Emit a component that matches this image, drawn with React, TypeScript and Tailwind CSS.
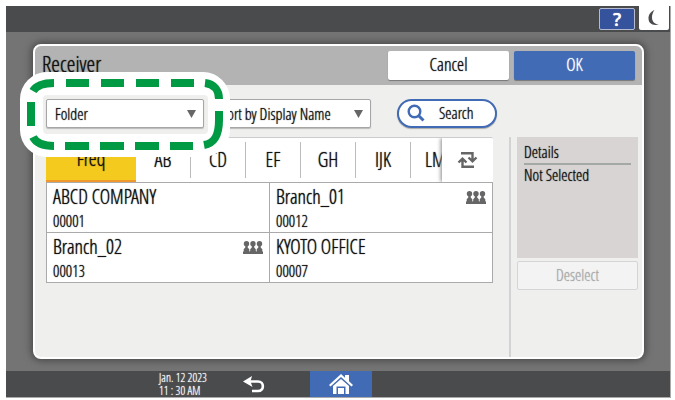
import type { ReactNode } from "react";

const tabs = ["AB", "CD", "EF", "GH", "IJK"];

interface Contact {
  name: string;
  code: string;
  group?: boolean;
}

const contacts: Contact[][] = [
  [
    { name: "ABCD COMPANY", code: "00001" },
    { name: "Branch_01", code: "00012", group: true },
  ],
  [
    { name: "Branch_02", code: "00013", group: true },
    { name: "KYOTO OFFICE", code: "00007" },
  ],
];

function GroupIcon() {
  return (
    <svg viewBox="0 0 20 13" className="h-[13px] w-5 fill-[#666]" aria-hidden="true">
      {[0, 6.5, 13].map((x) => (
        <g key={x} transform={`translate(${x} 0)`}>
          <circle cx="3.500" cy="2.800" r="2.700" />
          <path d="M2.300 4H4.700V6.500L6.300 8.300V10L7 11V13H0V11L.700 10V8.300L2.300 6.500z" />
        </g>
      ))}
    </svg>
  );
}

interface DropDownProps {
  label: string;
  option: string;
  className: string;
  children?: ReactNode;
}

function DropDown({ label, option, className, children }: DropDownProps) {
  return (
    <div className={className}>
      <select
        aria-label={label}
        className="h-[29px] w-full appearance-none rounded-xs border border-[#a6a6a6] bg-white px-2 text-base leading-5 shadow-[0_1px_1px_#bbb]"
      >
        <option>{option}</option>
      </select>
      <svg viewBox="0 0 9 8" className="pointer-events-none absolute top-[11px] right-2 h-2 w-[9px] fill-[#666]" aria-hidden="true">
        <path d="M0 0h9L4.500 8z" />
      </svg>
      {children}
    </div>
  );
}

/* White frame with a green dashed line around the folder drop-down */
function Callout() {
  return (
    <svg
      viewBox="0 0 210 85"
      className="pointer-events-none absolute -top-[27px] -left-[26px] h-[85px] w-[210px] max-w-none"
      aria-hidden="true"
    >
      <path
        fill="#fff"
        fillRule="evenodd"
        d="M27 0H183A27 27 0 0 1 210 27V58A27 27 0 0 1 183 85H27A27 27 0 0 1 0 58V27A27 27 0 0 1 27 0ZM27 23A4 4 0 0 0 23 27V58A4 4 0 0 0 27 62H184A4 4 0 0 0 188 58V27A4 4 0 0 0 184 23Z"
      />
      <path
        fill="none"
        stroke="#009944"
        strokeWidth="8"
        d="M13 19C16 14 22 11 34 11M46 11H69M81 11H104M116 11H139M151 11H174M185 11C194 12 199 18 199 27M199 39V48C199 63 195 71 184 73M173 74H150M139 74H115M104 74H80M69 74H45M34 74C22 74 16 71 13 65M11 54V30"
      />
    </svg>
  );
}

export default function App() {
  return (
    <div className="bg-white p-1.5 pr-1 font-['Open_Sans_Condensed_Light','Roboto_Condensed',sans-serif] text-[#111] **:[text-shadow:0_0_1px_currentColor]">
      <div className="flex flex-col border-r border-b border-[#aaa] bg-[#747474]">
        <header className="flex h-[26px] items-start justify-end gap-1 bg-[#4a4b4d] pr-px">
          <button
            type="button"
            aria-label="Help"
            className="mt-0.5 flex h-[22px] w-9 items-center justify-center rounded-xs border border-[#b5bad0] bg-[#35529c] font-['Open_Sans',sans-serif] text-lg leading-none font-semibold text-white"
          >
            ?
          </button>
          <button type="button" aria-label="Energy saver" className="flex h-6 w-[30px] items-center justify-center rounded-b-xs bg-white">
            <svg viewBox="0 0 12 16" className="h-4 w-3 fill-[#4a4b4d]" aria-hidden="true">
              <path d="M6.500 0C2 2 .500 5 .500 8.500C.500 13 4 16 11 14.500C6 14 4 11 4 7.500C4 4.500 5 2 6.500 0z" />
            </svg>
          </button>
        </header>

        <main className="mt-3 mr-[26px] mb-3 ml-[27px] rounded-lg border-2 border-white bg-[#efefee] shadow-[0_0_7px_2px_#4a4a4a]">
          <div className="flex h-[39px] items-start gap-[5px] rounded-t-md bg-[#b3b3b3] pt-[5px] pr-[7px] pl-[7px]">
            <h1 className="flex-1 text-[22px] leading-6">Receiver</h1>
            <button type="button" className="h-[29px] w-[121px] rounded-xs bg-white pb-1 text-lg leading-none shadow-[0_1px_1px_#777]">
              Cancel
            </button>
            <button type="button" className="h-[29px] w-[121px] rounded-xs bg-[#416bb4] pb-1 text-lg leading-none text-white shadow-[0_1px_1px_#777]">
              OK
            </button>
          </div>

          <div className="flex items-center pt-3.5 pl-[11px]">
            <DropDown label="Destination type" option="Folder" className="relative z-20 w-[158px]">
              <Callout />
            </DropDown>
            <DropDown label="Sort order" option="Sort by Display Name" className="relative ml-2 w-[159px]" />
            <button
              type="button"
              className="ml-[26px] flex h-[29px] w-[100px] items-center gap-3.5 rounded-full border-2 border-[#416bb4] bg-white pb-0.5 pl-2 text-base leading-none shadow-[0_1px_1px_#aaa]"
            >
              <svg viewBox="0 0 18 18" className="size-[18px] fill-none stroke-[#416bb4]" aria-hidden="true">
                <circle cx="7.500" cy="7.500" r="5.800" strokeWidth="2.400" />
                <path d="M11.500 11.500L16.500 16.500" strokeWidth="3" />
              </svg>
              Search
            </button>
          </div>

          <div className="flex pt-[9px] pr-1 pl-[11px]">
            <section className="min-w-0 flex-1">
              <div className="flex h-[45px] overflow-hidden rounded-t-xs border-t border-[#ccc] bg-white">
                <div role="tablist" aria-label="Index" className="flex min-w-0 flex-1 overflow-hidden text-xl">
                  <button type="button" role="tab" aria-selected="true" className="w-[90px] shrink-0 border-b-2 border-[#f0982b] bg-[#f4ca1f]">
                    Freq
                  </button>
                  {tabs.map((tab) => (
                    <button key={tab} type="button" role="tab" aria-selected="false" className="my-1 w-[55px] shrink-0 border-r border-[#bbb]">
                      {tab}
                    </button>
                  ))}
                  <button type="button" role="tab" aria-selected="false" className="my-1 w-[55px] shrink-0 pl-3.5 text-left">
                    LM
                  </button>
                </div>
                <button type="button" aria-label="Switch index" className="z-10 flex w-[51px] items-center justify-center bg-white shadow-[-1px_0_4px_#888]">
                  <svg viewBox="0 0 21 16" className="h-4 w-[21px] fill-none stroke-[#666]" strokeWidth="2.400" aria-hidden="true">
                    <path d="M4 1.200H15.500V9M17 14.800H5.500V7M11.500 5.500L15.500 9.300L19.500 5.500M1.500 10.500L5.500 6.700L9.500 10.500" />
                  </svg>
                </button>
              </div>
              <table className="w-full table-fixed border-collapse bg-white">
                <tbody>
                  {contacts.map((row) => (
                    <tr key={row[0].code}>
                      {row.map((contact) => (
                        <td key={contact.code} className="h-[50px] border border-[#aaa] px-1.5 align-top">
                          <div className="flex items-start justify-between">
                            <p className="text-xl leading-7">{contact.name}</p>
                            <span className="pt-2">{contact.group && <GroupIcon />}</span>
                          </div>
                          <p className="text-base leading-5">{contact.code}</p>
                        </td>
                      ))}
                    </tr>
                  ))}
                </tbody>
              </table>
            </section>

            <aside className="ml-4 h-[220px] border-l-2 border-[#d3d3d3] pl-1.5">
              <div className="h-[121px] w-[121px] bg-[#d8d4d3] px-[7px] pt-1 text-base">
                <h2 className="border-b-2 border-[#a5a9a5] leading-[22px]">Details</h2>
                <p className="leading-5">Not Selected</p>
              </div>
              <button
                type="button"
                disabled
                className="mt-[3px] h-[29px] w-[121px] rounded-xs border border-[#d5d5d5] bg-[#f3f3f3] pb-0.5 text-base leading-none text-[#aaa]"
              >
                Deselect
              </button>
            </aside>
          </div>
        </main>

        <footer className="flex h-[26px] items-center bg-[#4a4b4d] text-white">
          <time dateTime="2023-01-12T11:30" className="ml-[153px] w-[84px] text-xs leading-[13px]">
            Jan. 12 2023
            <br />
            11 : 30 AM
          </time>
          <button type="button" aria-label="Back">
            <svg viewBox="0 0 22 17" className="h-[17px] w-[22px]" aria-hidden="true">
              <path d="M0 5.500L9 0L7.500 5.500L9.500 11z" fill="#fff" />
              <path d="M5 5.500H15C21.500 5.500 21.500 15 15 15H9" fill="none" stroke="#fff" strokeWidth="2.600" />
            </svg>
          </button>
          <button type="button" aria-label="Home" className="ml-[45px] flex h-full w-[62px] items-center justify-center bg-[#416bb4]">
            <svg viewBox="0 0 24 20" className="h-5 w-6" aria-hidden="true">
              <path d="M0 11L12 0L16 3.700V1H20V7.300L24 11L22.500 12.500L12 3L1.500 12.500z" fill="#fff" />
              <path d="M4 12L12 5L20 12V20H16.500V12.500H7.500V20H4zM9 14H15V20H9z" fill="#fff" />
            </svg>
          </button>
        </footer>
      </div>
    </div>
  );
}
